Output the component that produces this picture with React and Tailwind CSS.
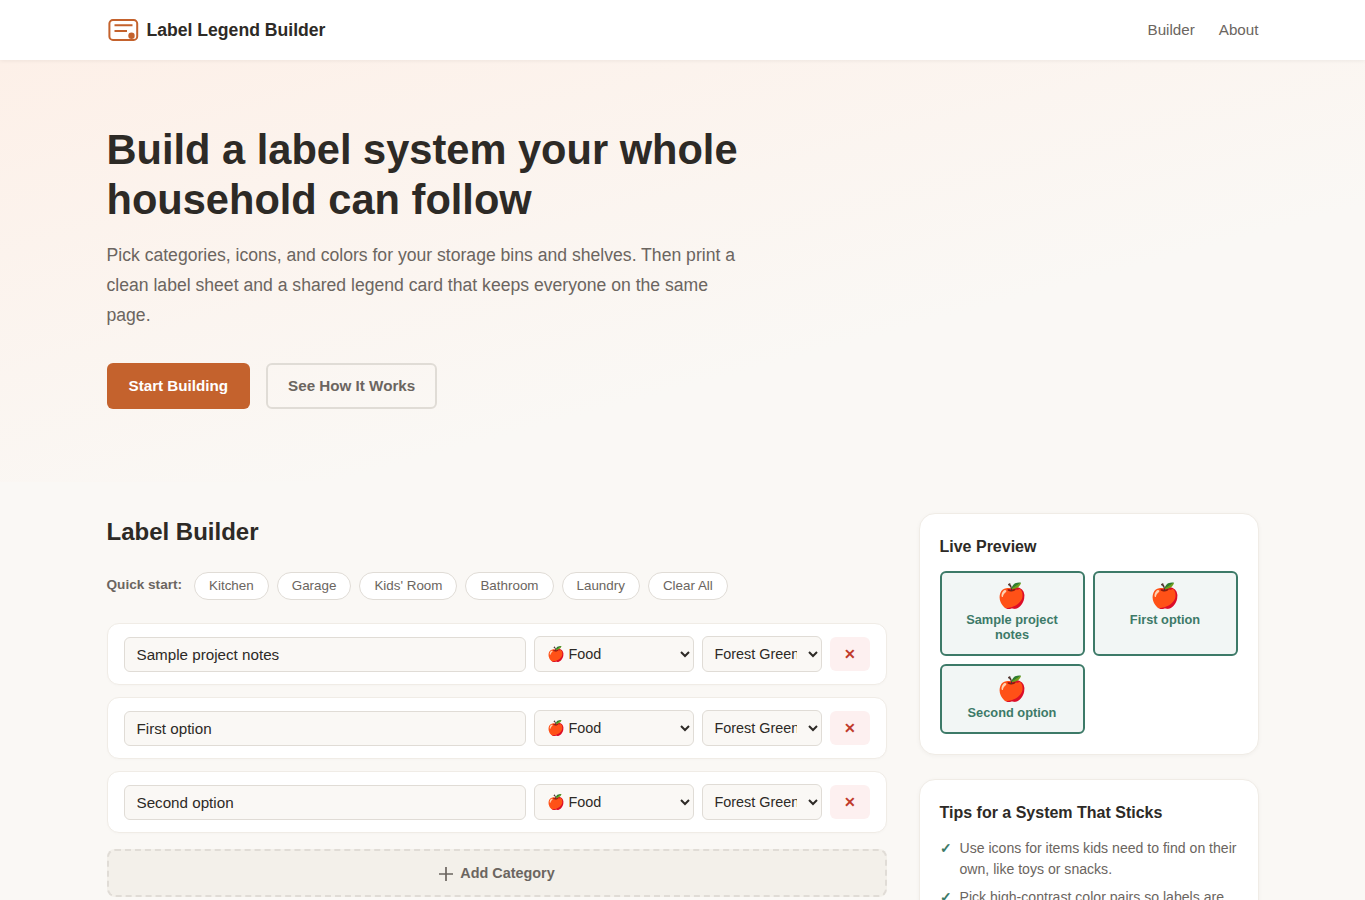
import React from "react";

const FONT = "font-['Liberation_Sans',Arial,sans-serif]";

function Logo() {
  return (
    <svg width="32" height="24" viewBox="0 0 32 24" fill="none" className="shrink-0">
      <rect x="2.4" y="2.1" width="27.8" height="19.8" rx="3.5" stroke="#c4622d" strokeWidth="2" />
      <path d="M7.5 7.2H25.5M7.5 13H20" stroke="#c4622d" strokeWidth="2" />
      <circle cx="24.5" cy="17.8" r="3.2" fill="#c4622d" />
    </svg>
  );
}

function Row({ value }) {
  return (
    <div className="flex items-center gap-2 rounded-[12px] border border-[#f0ece6] bg-white px-4 py-3 shadow-[0_1px_3px_rgba(0,0,0,0.02)]">
      <input
        readOnly
        value={value}
        className="h-[35px] min-w-0 flex-1 rounded-md border border-[#e0dcd6] bg-[#faf8f5] px-3 text-[15.2px] text-[#2d2a26] outline-none"
      />
      <select className="h-9 w-40 shrink-0 rounded-md border border-[#e0dcd6] bg-[#faf8f5] px-2 text-[14.4px] text-[#2d2a26]">
        <option>🍎 Food</option>
        <option>🧸 Toys</option>
      </select>
      <select className="h-9 w-[120px] shrink-0 rounded-md border border-[#e0dcd6] bg-[#faf8f5] px-2 text-[14.4px] text-[#2d2a26]">
        <option>Forest Green</option>
        <option>Terracotta</option>
      </select>
      <button className="flex h-[34px] w-10 shrink-0 items-center justify-center rounded-md bg-[#fdf0f0] text-[14px] font-bold text-[#c0392b]">
        ✕
      </button>
    </div>
  );
}

function PreviewCard({ text, tall }) {
  return (
    <div className={`flex flex-col items-center rounded-md border-2 border-[#3d7a68] bg-[#f2f6f5] px-2 pt-[9px] pb-[11px] text-center ${tall ? "h-[85px]" : "h-[70px]"}`}>
      <span className="text-[24px] leading-[28px]">🍎</span>
      <span className="mt-[2px] text-[12.8px] leading-[15.36px] font-bold text-[#3d7a68]">{text}</span>
    </div>
  );
}

function Tip({ children }) {
  return (
    <li className="flex gap-[9px] text-[14.08px] leading-[21.12px] text-[#6b6560]">
      <span className="w-[11px] shrink-0 font-bold text-[#3d7a68]">✓</span>
      <span>{children}</span>
    </li>
  );
}

export default function App() {
  const presets = ["Kitchen", "Garage", "Kids' Room", "Bathroom", "Laundry", "Clear All"];
  return (
    <div className={`${FONT} min-h-screen bg-[#faf8f5] text-[#2d2a26]`}>
      <header className="relative z-10 h-[60px] bg-white shadow-[0_1px_4px_rgba(0,0,0,0.06)]">
        <div className="mx-auto flex h-full max-w-[1200px] items-center justify-between px-6">
          <div className="flex items-center gap-2">
            <Logo />
            <span className="text-[17.6px] font-bold">Label Legend Builder</span>
          </div>
          <nav className="flex gap-6 text-[15.2px] text-[#6b6560]">
            <a>Builder</a>
            <a>About</a>
          </nav>
        </div>
      </header>

      <section className="bg-[linear-gradient(165deg,#fdf0e8_0%,#faf8f5_65%)] pt-[65px] pb-[73px]">
        <div className="mx-auto max-w-[1200px] px-6">
          <h1 className="max-w-[680px] text-[41.6px] leading-[50px] font-bold tracking-normal">
            Build a label system your whole household can follow
          </h1>
          <p className="mt-[15px] max-w-[640px] text-[17.6px] leading-[30px] text-[#6b6560]">
            Pick categories, icons, and colors for your storage bins and shelves. Then print a clean label sheet and a shared legend card that keeps everyone on the same page.
          </p>
          <div className="mt-[33px] flex gap-4">
            <button className="h-[46px] rounded-md bg-[#c4622d] px-[22px] text-[15.2px] font-bold text-white">Start Building</button>
            <button className="h-[46px] rounded-md border-2 border-[#e0dcd6] px-5 text-[15.2px] font-bold text-[#6b6560]">See How It Works</button>
          </div>
        </div>
      </section>

      <main className="mx-auto grid max-w-[1200px] grid-cols-[1fr_340px] items-start gap-8 px-6 pt-[31px]">
        <div>
          <h2 className="mt-[3px] text-[24px] leading-[32px] font-bold">Label Builder</h2>
          <div className="mt-[24px] flex items-center gap-2">
            <span className="mr-1 -translate-y-px text-[13.6px] font-bold text-[#6b6560]">Quick start:</span>
            {presets.map((p) => (
              <button key={p} className="h-[28px] rounded-full border border-[#e0dcd6] bg-white px-[14px] text-[13.4px] text-[#6b6560]">{p}</button>
            ))}
          </div>
          <div className="mt-[23px] flex flex-col gap-3">
            <Row value="Sample project notes" />
            <Row value="First option" />
            <Row value="Second option" />
          </div>
          <button className="mt-4 flex h-[48px] w-full items-center justify-center gap-[6px] rounded-lg border-2 border-dashed border-[#e0dcd6] bg-[#f3f0ea] pt-px text-[14.4px] font-bold text-[#6b6560]">
            <svg width="16" height="16" viewBox="0 0 16 16" fill="none"><path d="M8 1v14M1 8h14" stroke="currentColor" strokeWidth="1.7" /></svg>
            Add Category
          </button>
        </div>

        <aside className="flex flex-col gap-6">
          <div className="rounded-2xl border border-[#f0ece6] bg-white p-5 shadow-[0_1px_4px_rgba(0,0,0,0.04)]">
            <h3 className="pt-[2px] text-[16px] leading-[22px] font-bold">Live Preview</h3>
            <div className="mt-[13px] grid grid-cols-2 items-start gap-2">
              <PreviewCard text="Sample project notes" tall />
              <PreviewCard text="First option" tall />
              <PreviewCard text="Second option" />
            </div>
          </div>
          <div className="rounded-2xl border border-[#f0ece6] bg-white p-5 shadow-[0_1px_4px_rgba(0,0,0,0.04)]">
            <h3 className="pt-[2px] text-[16px] leading-[22px] font-bold">Tips for a System That Sticks</h3>
            <ul className="mt-[14px] flex flex-col gap-[7px]">
              <Tip>Use icons for items kids need to find on their own, like toys or snacks.</Tip>
              <Tip>Pick high-contrast color pairs so labels are easy to read from across the room.</Tip>
            </ul>
          </div>
        </aside>
      </main>
    </div>
  );
}
